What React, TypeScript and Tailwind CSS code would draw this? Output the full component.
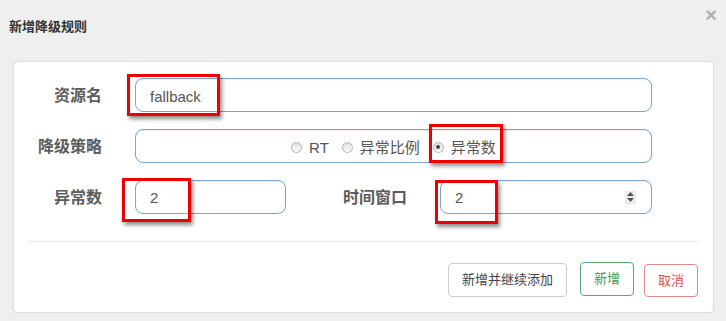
// Degrade rule dialog: "新增降级规则" with annotated fields
const FONT = "font-['Liberation_Sans','Noto_Sans_CJK_SC',sans-serif]"

const inputClass =
  'h-[34px] rounded-[8px] border border-[#7ea4c9] bg-white shadow-[inset_0_1px_1px_rgba(0,0,0,0.075)] flex items-center'

const labelClass = 'text-[16px] font-bold text-[#5c5c5c] text-right leading-none pt-[2px]'

function Radio({ checked, label }: { checked?: boolean; label: string }) {
  return (
    <span className="flex items-center">
      <span className="w-[11px] h-[11px] rounded-full border border-[#b4b4b4] bg-gradient-to-b from-[#e2e2e2] to-[#fafafa] flex items-center justify-center">
        {checked && <span className="w-[4px] h-[4px] rounded-full bg-[#444]" />}
      </span>
      <span className="ml-[7px] text-[15px] text-[#555] leading-none">{label}</span>
    </span>
  )
}

function Spinner() {
  return (
    <span className="w-[11px] h-[13px] bg-[#ececec] flex flex-col items-center justify-center gap-[2px]">
      <svg width="7" height="4" viewBox="0 0 7 4">
        <path d="M0 4 L3.5 0 L7 4 Z" fill="#555" />
      </svg>
      <svg width="7" height="4" viewBox="0 0 7 4">
        <path d="M0 0 L3.5 4 L7 0 Z" fill="#555" />
      </svg>
    </span>
  )
}

// Red annotation boxes drawn over the form
const MARKS = [
  'left-[127px] top-[74px] w-[93px] h-[42px]',
  'left-[429px] top-[124px] w-[74px] h-[39px]',
  'left-[122px] top-[178px] w-[69px] h-[44px]',
  'left-[435px] top-[180px] w-[63px] h-[44px]',
]

export default function App() {
  return (
    <div className={`relative w-[726px] h-[321px] overflow-hidden bg-[#efefef] ${FONT}`}>
      {/* Header */}
      <div className="h-[61px] flex items-start justify-between">
        <div className="pl-[9px] pt-[19px] text-[13px] font-bold text-[#333] leading-[16px]">新增降级规则</div>
        <div className="pr-[9px] pt-[5px] text-[20px] font-bold text-[#b0b0b0] leading-[20px]">×</div>
      </div>

      {/* Card */}
      <div className="ml-[13px] mr-[12px] h-[252px] rounded-[4px] border border-[#dedede] bg-white shadow-[0_0_2px_rgba(0,0,0,0.06)]">
        <div className="pt-[16px] flex flex-col gap-[17px]">
          <div className="flex items-center">
            <div className={`w-[88px] ${labelClass}`}>资源名</div>
            <div className={`ml-[33px] w-[517px] pl-[14px] pt-[2px] ${inputClass}`}>
              <span className="text-[15px] text-[#555] leading-none">fallback</span>
            </div>
          </div>

          <div className="flex items-center">
            <div className={`w-[88px] ${labelClass}`}>降级策略</div>
            <div className={`ml-[33px] w-[517px] justify-center gap-[13px] pt-[2px] ${inputClass}`}>
              <Radio label="RT" />
              <Radio label="异常比例" />
              <Radio label="异常数" checked />
            </div>
          </div>

          <div className="flex items-center">
            <div className={`w-[88px] ${labelClass}`}>异常数</div>
            <div className={`ml-[33px] w-[151px] pl-[14px] ${inputClass}`}>
              <span className="text-[15px] text-[#555] leading-none">2</span>
            </div>
            <div className={`w-[121px] ${labelClass}`}>时间窗口</div>
            <div className={`ml-[33px] w-[212px] pl-[14px] pr-[15px] justify-between ${inputClass}`}>
              <span className="text-[15px] text-[#555] leading-none">2</span>
              <Spinner />
            </div>
          </div>
        </div>

        <div className="mt-[27px] mx-[15px] h-px bg-[#e6e6e6]" />

        <div className="mt-[21px] pr-[15px] flex justify-end items-start">
          <button className="h-[34px] px-[13px] rounded-[4px] border border-[#cfcfcf] bg-white text-[13px] text-[#444]">
            新增并继续添加
          </button>
          <button className="ml-[13px] -mt-[1px] h-[34px] w-[54px] rounded-[4px] border border-[#5aa96a] bg-white text-[13px] text-[#3f9a4f]">
            新增
          </button>
          <button className="ml-[10px] mt-[1px] h-[33px] w-[54px] rounded-[4px] border border-[#dd8a88] bg-white text-[13px] text-[#d9534f]">
            取消
          </button>
        </div>
      </div>

      {MARKS.map((m) => (
        <div
          key={m}
          className={`absolute ${m} border-[3px] border-[#ee0000] shadow-[2px_3px_4px_rgba(0,0,0,0.45)]`}
        />
      ))}
    </div>
  )
}
